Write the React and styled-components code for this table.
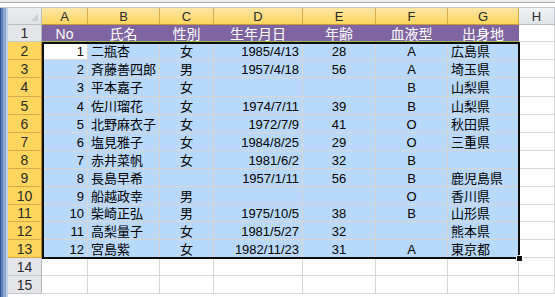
import React from 'react';
import styled, { createGlobalStyle } from 'styled-components';

const GlobalStyle = createGlobalStyle`
  html, body {
    margin: 0;
    padding: 0;
    background: #ffffff;
    overflow: hidden;
  }
  body {
    font-family: "Liberation Sans", "Noto Sans CJK JP", sans-serif;
  }
`;

const COLS = ['A', 'B', 'C', 'D', 'E', 'F', 'G', 'H'];
const COL_W = [46, 72, 54, 89, 73, 72, 71];
const ROW_H = [17, 18, 18, 19, 18, 18, 18, 18, 18, 18, 17, 18, 18, 18, 18];

// align for each data column
const ALIGN = ['right', 'left', 'center', 'right', 'center', 'center', 'left'];

const HEAD = ['No', '氏名', '性別', '生年月日', '年齢', '血液型', '出身地'];

const DATA = [
  [1, '二瓶杏', '女', '1985/4/13', '28', 'A', '広島県'],
  [2, '斉藤善四郎', '男', '1957/4/18', '56', 'A', '埼玉県'],
  [3, '平本嘉子', '女', '', '', 'B', '山梨県'],
  [4, '佐川瑠花', '女', '1974/7/11', '39', 'B', '山梨県'],
  [5, '北野麻衣子', '女', '1972/7/9', '41', 'O', '秋田県'],
  [6, '塩見雅子', '女', '1984/8/25', '29', 'O', '三重県'],
  [7, '赤井菜帆', '女', '1981/6/2', '32', 'B', ''],
  [8, '長島早希', '', '1957/1/11', '56', 'B', '鹿児島県'],
  [9, '船越政幸', '男', '', '', 'O', '香川県'],
  [10, '柴崎正弘', '男', '1975/10/5', '38', 'B', '山形県'],
  [11, '高梨量子', '女', '1981/5/27', '32', '', '熊本県'],
  [12, '宮島紫', '女', '1982/11/23', '31', 'A', '東京都'],
];

const Window = styled.div`
  display: flex;
  flex-direction: column;
  width: 555px;
  height: 297px;
  overflow: hidden;
`;

const TopStrip = styled.div`
  height: 8px;
  flex: none;
  background: linear-gradient(#ececec 0 2px, #a9a9a9 2px 3px, #ffffff 3px 7px, #c4c4c4 7px 8px);
`;

const Body = styled.div`
  display: flex;
  flex: 1;
  min-height: 0;
`;

const Frame = styled.div`
  width: 8px;
  flex: none;
  background: linear-gradient(to right, #34558f 0 1px, #5f80bb 1px 3px, #8ea8d2 3px 6px, #c3d1e8 6px 8px);
`;

const Sheet = styled.div`
  position: relative;
  flex: 1;
  display: grid;
  grid-template-columns: 34px ${COL_W.map((w) => w + 'px').join(' ')} 1fr;
  grid-template-rows: 17px ${ROW_H.map((h) => h + 'px').join(' ')} 1fr;
  align-content: start;
`;

const Corner = styled.div`
  position: relative;
  background: linear-gradient(#eceef1, #dfe2e6);
  border-right: 1px solid #b9bcc1;
  border-bottom: 1px solid #b9bcc1;

  &::after {
    content: '';
    position: absolute;
    right: 3px;
    bottom: 3px;
    border-left: 7px solid transparent;
    border-bottom: 7px solid #c9ccd0;
  }
`;

const ColHeader = styled.div`
  display: flex;
  align-items: center;
  justify-content: center;
  font-size: 13px;
  color: #2a2a2a;
  line-height: 1;
  background: ${(p) =>
    p.$selected
      ? 'linear-gradient(#fbe6a6, #ffd65d)'
      : 'linear-gradient(#f1f3f6, #dfe2e7)'};
  border-right: 1px solid ${(p) => (p.$selected ? '#d7ac4f' : '#c2c6cc')};
  border-bottom: 1px solid ${(p) => (p.$selected ? '#c9993d' : '#b9bdc3')};
`;

const RowHeader = styled.div`
  display: flex;
  align-items: center;
  justify-content: center;
  font-size: 14px;
  color: #2a2a2a;
  line-height: 1;
  background: ${(p) => (p.$selected ? '#ffd65d' : '#e3e5e9')};
  border-right: 1px solid ${(p) => (p.$selected ? '#c28a2a' : '#b3b7bd')};
  border-bottom: 1px solid ${(p) => (p.$selected ? '#dba548' : '#c6c9ce')};
`;

const fills = {
  head: '#8064a2',
  sel: '#b9d9fb',
  active: '#ffffff',
  none: '#ffffff',
};

const Cell = styled.div`
  display: flex;
  align-items: center;
  justify-content: ${(p) =>
    p.$align === 'right' ? 'flex-end' : p.$align === 'center' ? 'center' : 'flex-start'};
  padding: 1px ${(p) => (p.$align === 'right' ? '3px' : '0')} 0
    ${(p) => (p.$align === 'left' ? '3px' : '0')};
  overflow: hidden;
  white-space: nowrap;
  line-height: 1;
  font-size: ${(p) => (p.$fill === 'head' ? '14px' : '13px')};
  color: ${(p) => (p.$fill === 'head' ? '#ffffff' : '#000000')};
  background: ${(p) => fills[p.$fill]};
  border-right: 1px solid ${(p) => (p.$fill === 'head' ? '#8064a2' : '#d6d6d6')};
  border-bottom: 1px solid ${(p) => (p.$fill === 'head' ? '#9bbb59' : '#d6d6d6')};
`;

const Selection = styled.div`
  position: absolute;
  grid-column: 2 / 9;
  grid-row: 3 / 15;
  inset: 0 -1px -1px 0;
  border: 2px solid #0c0c0c;
  pointer-events: none;
  z-index: 2;
`;

const FillHandle = styled.div`
  position: absolute;
  right: -5px;
  bottom: -5px;
  width: 5px;
  height: 5px;
  background: #0c0c0c;
  border: 1px solid #ffffff;
`;

export default function App() {
  const rows = [];
  for (let r = 1; r <= ROW_H.length; r++) {
    const inData = r >= 2 && r <= 13;
    rows.push(
      <RowHeader key={'h' + r} $selected={inData}>
        {r}
      </RowHeader>
    );
    COLS.forEach((c, i) => {
      let fill = 'none';
      let text = '';
      let align = 'left';
      if (i < 7) {
        if (r === 1) {
          fill = 'head';
          text = HEAD[i];
          align = 'center';
        } else if (inData) {
          fill = r === 2 && i === 0 ? 'active' : 'sel';
          text = DATA[r - 2][i];
          align = ALIGN[i];
        }
      }
      rows.push(
        <Cell key={c + r} $fill={fill} $align={align}>
          {text}
        </Cell>
      );
    });
  }

  return (
    <Window>
      <GlobalStyle />
      <TopStrip />
      <Body>
        <Frame />
        <Sheet>
          <Corner />
          {COLS.map((c, i) => (
            <ColHeader key={c} $selected={i < 7}>
              {c}
            </ColHeader>
          ))}
          {rows}
          <Selection>
            <FillHandle />
          </Selection>
        </Sheet>
      </Body>
    </Window>
  );
}
